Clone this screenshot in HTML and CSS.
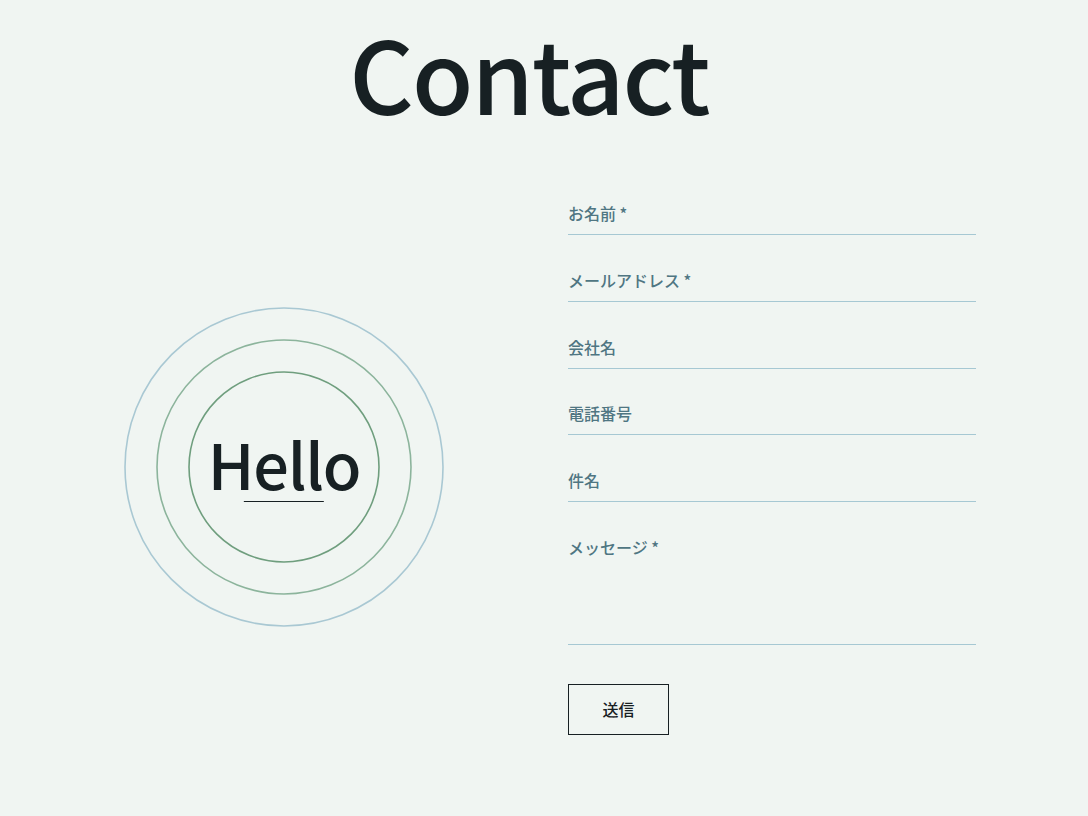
FILE: index.html
```html
<!doctype html>
<html lang="ja">
  <head>
    <meta charset="utf-8">
    <title>Contact</title>
    <meta name="viewport" content="width=device-width,minimum-scale=1,initial-scale=1">
    <link rel="stylesheet" href="styles.css">
  </head>
  <body>
    <header class="head">
      <h1>Contact</h1>
    </header>

    <main class="contact">
      <div class="hello">
        <svg class="rings" width="322" height="322" viewBox="0 0 322 322">
          <circle cx="161" cy="161" r="159" fill="none" stroke="#a9c8d3" stroke-width="1.6"/>
          <circle cx="161" cy="161" r="127" fill="none" stroke="#8cb49c" stroke-width="1.6"/>
          <circle cx="161" cy="161" r="95" fill="none" stroke="#6f9e7e" stroke-width="1.6"/>
        </svg>
        <p class="hello-text">Hello</p>
      </div>

      <form class="form">
        <div class="field">
          <input id="name" type="text" name="name">
          <label for="name">お名前 *</label>
        </div>
        <div class="field">
          <input id="email" type="email" name="email">
          <label for="email">メールアドレス *</label>
        </div>
        <div class="field">
          <input id="company" type="text" name="company">
          <label for="company">会社名</label>
        </div>
        <div class="field">
          <input id="tel" type="tel" name="tel">
          <label for="tel">電話番号</label>
        </div>
        <div class="field">
          <input id="subject" type="text" name="subject">
          <label for="subject">件名</label>
        </div>
        <div class="field">
          <textarea id="message" name="message"></textarea>
          <label for="message">メッセージ *</label>
        </div>
        <button type="submit" class="send">送信</button>
      </form>
    </main>
  </body>
</html>
```

FILE: styles.css
```css
body {
  margin: 0px;
  background: #f0f5f2;
  color: #172023;
  font-family: "Noto Sans CJK JP", "Noto Sans", sans-serif;
}

.head {
  width: 1058px;
  text-align: center;
}

.head h1 {
  margin: 0;
  font-size: 100px;
  font-weight: 500;
  letter-spacing: -0.02em;
  line-height: 1.44;
}

.contact {
  display: flex;
  align-items: center;
  padding-top: 56px;
}

.hello {
  position: relative;
  flex: 0 0 568px;
  display: flex;
  justify-content: center;
}

.rings {
  display: block;
}

.hello-text {
  position: absolute;
  top: 125px;
  left: 50%;
  transform: translateX(-50%);
  margin: 0;
  padding-bottom: 8px;
  font-size: 63px;
  font-weight: 500;
  letter-spacing: -0.02em;
  line-height: 1;
}

.hello-text::after {
  content: "";
  position: absolute;
  left: 50%;
  bottom: 0;
  width: 80px;
  margin-left: -40px;
  border-bottom: 1px solid #172023;
}

.form {
  width: 408px;
}

.field {
  position: relative;
  margin-bottom: 31.75px;
}

.field label {
  position: absolute;
  top: 1px;
  left: 0;
  font-size: 16px;
  font-weight: 500;
  line-height: 24px;
  color: #4f7682;
}

.field input,
.field textarea {
  display: block;
  width: 100%;
  box-sizing: border-box;
  height: 35px;
  padding: 0;
  border: none;
  border-bottom: 1px solid #a6c8d3;
  background: transparent;
  font-family: inherit;
  font-size: 16px;
  resize: none;
}

.field textarea {
  height: 111px;
}

.field:last-of-type {
  margin-bottom: 39px;
}

.send {
  display: block;
  width: 101px;
  height: 51px;
  border: 1px solid #172023;
  background: transparent;
  color: #172023;
  font-family: inherit;
  font-size: 16px;
  font-weight: 500;
  cursor: pointer;
}
```
